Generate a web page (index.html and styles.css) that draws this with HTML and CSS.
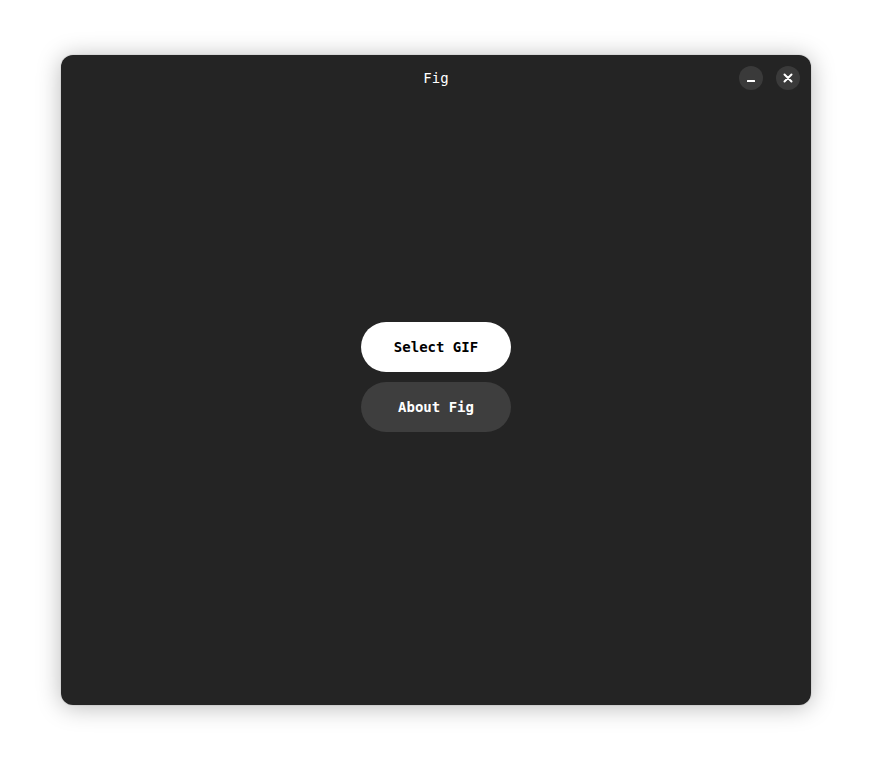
FILE: index.html
```html
<!DOCTYPE html>
<html>
<head>
<meta charset="utf-8">
<link rel="stylesheet" href="styles.css">
</head>
<body>
<div class="window">
  <div class="header">
    <div class="title">Fig</div>
    <div class="controls">
      <button class="ctl" aria-label="Minimize">
        <svg width="12" height="12" viewBox="0 0 12 12"><rect x="2" y="8" width="8" height="2" rx="0.5" fill="#fff"/></svg>
      </button>
      <button class="ctl" aria-label="Close">
        <svg width="12" height="12" viewBox="0 0 12 12"><path d="M2.5 2.5 L9.5 9.5 M9.5 2.5 L2.5 9.5" stroke="#fff" stroke-width="2" stroke-linecap="round"/></svg>
      </button>
    </div>
  </div>
  <div class="content">
    <div class="actions">
      <button class="btn primary">Select GIF</button>
      <button class="btn secondary">About Fig</button>
    </div>
  </div>
</div>
</body>
</html>
```
FILE: styles.css
```css
html, body {
  margin: 0;
  padding: 0;
  background: #ffffff;
}
body {
  width: 872px;
  height: 772px;
  padding-top: 55px;
  padding-left: 61px;
  box-sizing: border-box;
  font-family: "DejaVu Sans Mono", monospace;
}
.window {
  width: 750px;
  height: 650px;
  background: #242424;
  border-radius: 12px;
  box-shadow: 0 2px 24px rgba(0,0,0,0.28), 0 0 0 1px rgba(0,0,0,0.05);
  display: flex;
  flex-direction: column;
  overflow: hidden;
}
.header {
  height: 46px;
  position: relative;
  display: flex;
  align-items: center;
  justify-content: center;
}
.title {
  color: #ffffff;
  font-size: 14px;
  line-height: 1;
}
.controls {
  position: absolute;
  right: 11px;
  top: 11px;
  display: flex;
  gap: 13px;
}
.ctl {
  width: 24px;
  height: 24px;
  border-radius: 50%;
  border: none;
  padding: 0;
  background: #3a3a3a;
  display: flex;
  align-items: center;
  justify-content: center;
}
.content {
  flex: 1;
  display: flex;
  align-items: center;
  justify-content: center;
  padding-bottom: 52px;
}
.actions {
  display: flex;
  flex-direction: column;
  gap: 10px;
}
.btn {
  width: 150px;
  height: 50px;
  border-radius: 25px;
  border: none;
  font-family: "DejaVu Sans Mono", monospace;
  font-weight: bold;
  font-size: 14px;
  padding: 0;
}
.primary {
  background: #ffffff;
  color: #000000;
}
.secondary {
  background: #3e3e3e;
  color: #ffffff;
}
```
